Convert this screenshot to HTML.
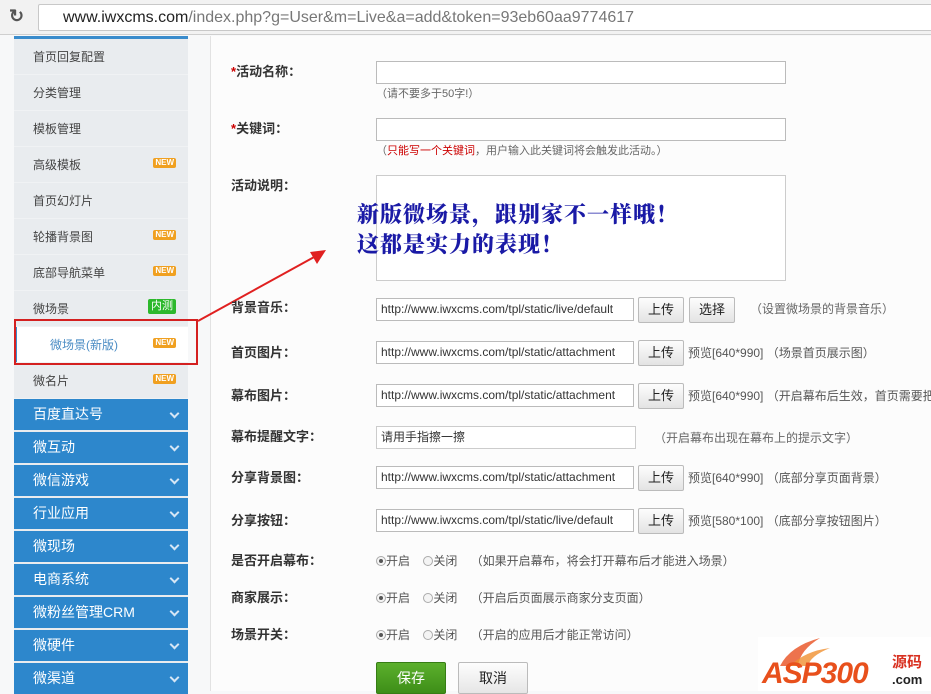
<!DOCTYPE html>
<html><head><meta charset="utf-8">
<style>
*{margin:0;padding:0;box-sizing:border-box}
body{width:931px;height:691px;overflow:hidden;background:#f7f8f9;font-family:"Liberation Sans","Noto Sans CJK SC",sans-serif;font-size:12px;color:#333;position:relative}
.bar{position:absolute;left:0;top:0;width:931px;height:35px;background:#f2f2f2;border-bottom:1px solid #cfcfcf}
.url{position:absolute;left:38px;top:4px;width:900px;height:27px;background:#fff;border:1px solid #c8c8c8;border-radius:2px;font-size:16px;line-height:25px;padding-left:24px;color:#777}
.url b{font-weight:normal;color:#222}
.reload{position:absolute;left:9px;top:6px;font-size:18px;color:#555;font-weight:bold}
.side{position:absolute;left:14px;top:36px;width:174px;height:655px;background:#e9ecef;border-top:3px solid #3a8ccc}
.li{position:absolute;left:0;width:174px;height:36px;line-height:36px;padding-left:19px;font-size:12px;color:#444;border-bottom:1px solid #f0f2f4}
.new{position:absolute;right:12px;top:11px;background:#f0a020;color:#fff;font-size:8px;line-height:10px;height:10px;padding:0 2px;border-radius:2px;font-weight:bold}
.nc{position:absolute;right:12px;top:8px;background:#2cb82c;color:#fff;font-size:11px;line-height:15px;padding:0 3px;border-radius:2px}
.bl{position:absolute;left:14px;width:174px;height:31px;background:#2d87cc;color:#fff;font-size:14px;line-height:31px;padding-left:19px}
.bl i{position:absolute;right:10px;top:11px;width:7px;height:7px;border-right:2px solid #d5e6f5;border-bottom:2px solid #d5e6f5;transform:rotate(45deg)}
.main{position:absolute;left:210px;top:36px;width:721px;height:655px;background:#fcfcfc;border-left:1px solid #e2e2e2}
.lab{position:absolute;left:231px;font-size:13px;font-weight:bold;color:#333;line-height:16px}
.lab s{text-decoration:none;color:#c00}
.in{position:absolute;left:376px;height:23px;border:1px solid #bbb;background:#fff;font-size:12px;line-height:21px;padding-left:4px;color:#333;overflow:hidden;white-space:nowrap}
.hint{position:absolute;font-size:11px;color:#666;line-height:14px}
.btn{position:absolute;height:26px;width:46px;border:1px solid #bbb;border-radius:2px;background:linear-gradient(#fdfdfd,#e3e3e3);font-size:13px;text-align:center;line-height:24px;color:#222}
.pv{position:absolute;font-size:12px;color:#555;line-height:14px;white-space:nowrap}
.rad{position:absolute;font-size:12px;color:#555;line-height:14px;white-space:nowrap}
.r{display:inline-block;width:10px;height:10px;border:1px solid #aaa;border-radius:50%;background:#f4f4f4;vertical-align:-1px;position:relative}
.r.on::after{content:"";position:absolute;left:2px;top:2px;width:4px;height:4px;border-radius:50%;background:#555}
</style></head><body>
<div class="bar"><div class="reload">&#x21bb;</div><div class="url"><b>www.iwxcms.com</b>/index.php?g=User&amp;m=Live&amp;a=add&amp;token=93eb60aa9774617</div></div>
<div class="side">
<div class="li" style="top:0">首页回复配置</div>
<div class="li" style="top:36px">分类管理</div>
<div class="li" style="top:72px">模板管理</div>
<div class="li" style="top:108px">高级模板<span class="new">NEW</span></div>
<div class="li" style="top:144px">首页幻灯片</div>
<div class="li" style="top:180px">轮播背景图<span class="new">NEW</span></div>
<div class="li" style="top:216px">底部导航菜单<span class="new">NEW</span></div>
<div class="li" style="top:252px">微场景<span class="nc">内测</span></div>
<div class="li" style="top:288px;background:#fff;color:#4a8cc4;padding-left:33px;border-left:3px solid #3a8ccc">微场景(新版)<span class="new">NEW</span></div>
<div class="li" style="top:324px">微名片<span class="new">NEW</span></div>
</div>
<div class="bl" style="top:399px">百度直达号<i></i></div>
<div class="bl" style="top:432px">微互动<i></i></div>
<div class="bl" style="top:465px">微信游戏<i></i></div>
<div class="bl" style="top:498px">行业应用<i></i></div>
<div class="bl" style="top:531px">微现场<i></i></div>
<div class="bl" style="top:564px">电商系统<i></i></div>
<div class="bl" style="top:597px">微粉丝管理CRM<i></i></div>
<div class="bl" style="top:630px">微硬件<i></i></div>
<div class="bl" style="top:663px">微渠道<i></i></div>
<div style="position:absolute;left:14px;top:319px;width:184px;height:46px;border:2px solid #d42020"></div>
<div class="main"></div>

<div class="lab" style="top:64px"><s>*</s>活动名称：</div>
<div class="in" style="top:61px;width:410px"></div>
<div class="hint" style="left:376px;top:87px">（请不要多于50字!）</div>
<div class="lab" style="top:121px"><s>*</s>关键词：</div>
<div class="in" style="top:118px;width:410px"></div>
<div class="hint" style="left:376px;top:144px">（<span style="color:#c00">只能写一个关键词</span>，用户输入此关键词将会触发此活动。）</div>
<div class="lab" style="top:178px">活动说明：</div>
<div class="in" style="top:175px;width:410px;height:106px;border-color:#ccc"></div>
<div style="position:absolute;left:357px;top:199px;font-family:'Noto Serif CJK SC','Liberation Serif',serif;font-weight:900;font-size:22px;line-height:30px;color:#1a1aa6;white-space:nowrap;letter-spacing:1px">新版微场景，跟别家不一样哦！<br>这都是实力的表现！</div>
<svg style="position:absolute;left:0;top:0" width="931" height="691"><line x1="198" y1="321" x2="316" y2="256" stroke="#e02020" stroke-width="2"/><polygon points="326,250 310,252 317,264" fill="#e02020"/></svg>

<div class="lab" style="top:300px">背景音乐：</div>
<div class="in" style="top:298px;width:258px">http://www.iwxcms.com/tpl/static/live/default</div>
<div class="btn" style="left:638px;top:297px">上传</div><div class="btn" style="left:689px;top:297px">选择</div>
<div class="hint" style="left:750px;top:302px;font-size:12px">（设置微场景的背景音乐）</div>

<div class="lab" style="top:345px">首页图片：</div>
<div class="in" style="top:341px;width:258px">http://www.iwxcms.com/tpl/static/attachment</div>
<div class="btn" style="left:638px;top:340px">上传</div>
<div class="pv" style="left:688px;top:346px">预览[640*990] （场景首页展示图）</div>

<div class="lab" style="top:388px">幕布图片：</div>
<div class="in" style="top:384px;width:258px">http://www.iwxcms.com/tpl/static/attachment</div>
<div class="btn" style="left:638px;top:383px">上传</div>
<div class="pv" style="left:688px;top:389px">预览[640*990] （开启幕布后生效，首页需要把</div>

<div class="lab" style="top:429px">幕布提醒文字：</div>
<div class="in" style="top:426px;width:260px;border-color:#ccc">请用手指擦一擦</div>
<div class="hint" style="left:654px;top:431px;font-size:12px">（开启幕布出现在幕布上的提示文字）</div>

<div class="lab" style="top:470px">分享背景图：</div>
<div class="in" style="top:466px;width:258px">http://www.iwxcms.com/tpl/static/attachment</div>
<div class="btn" style="left:638px;top:465px">上传</div>
<div class="pv" style="left:688px;top:471px">预览[640*990] （底部分享页面背景）</div>

<div class="lab" style="top:513px">分享按钮：</div>
<div class="in" style="top:509px;width:258px">http://www.iwxcms.com/tpl/static/live/default</div>
<div class="btn" style="left:638px;top:508px">上传</div>
<div class="pv" style="left:688px;top:514px">预览[580*100] （底部分享按钮图片）</div>

<div class="lab" style="top:553px">是否开启幕布：</div>
<div class="rad" style="left:376px;top:554px"><span class="r on"></span>开启 &nbsp; &nbsp;<span class="r"></span>关闭 &nbsp; &nbsp;（如果开启幕布，将会打开幕布后才能进入场景）</div>
<div class="lab" style="top:590px">商家展示：</div>
<div class="rad" style="left:376px;top:591px"><span class="r on"></span>开启 &nbsp; &nbsp;<span class="r"></span>关闭 &nbsp; &nbsp;（开启后页面展示商家分支页面）</div>
<div class="lab" style="top:627px">场景开关：</div>
<div class="rad" style="left:376px;top:628px"><span class="r on"></span>开启 &nbsp; &nbsp;<span class="r"></span>关闭 &nbsp; &nbsp;（开启的应用后才能正常访问）</div>

<div style="position:absolute;left:376px;top:662px;width:70px;height:32px;background:linear-gradient(#5cb02c,#3e8e18);border:1px solid #367d14;border-radius:2px;color:#fff;font-size:14px;text-align:center;line-height:30px">保存</div>
<div style="position:absolute;left:458px;top:662px;width:70px;height:32px;background:linear-gradient(#fdfdfd,#e6e6e6);border:1px solid #bbb;border-radius:2px;color:#222;font-size:14px;text-align:center;line-height:30px">取消</div>

<div style="position:absolute;left:758px;top:637px;width:173px;height:54px;background:#fff"></div>
<svg style="position:absolute;left:760px;top:636px" width="120" height="30"><path d="M20 30 Q30 10 60 2 Q40 14 38 30Z" fill="#e85020" opacity=".8"/><path d="M30 30 Q45 15 70 12 Q50 20 48 30Z" fill="#f09030" opacity=".8"/></svg>
<div style="position:absolute;left:762px;top:658px;font-family:'Liberation Sans',sans-serif;font-weight:bold;font-style:italic;font-size:30px;line-height:32px;color:#e8501c;letter-spacing:-1px">ASP300</div>
<div style="position:absolute;left:892px;top:655px;font-size:15px;font-weight:bold;color:#d83020;line-height:16px">源码</div>
<div style="position:absolute;left:892px;top:673px;font-size:13px;font-weight:bold;color:#222;line-height:14px">.com</div>
</body></html>
